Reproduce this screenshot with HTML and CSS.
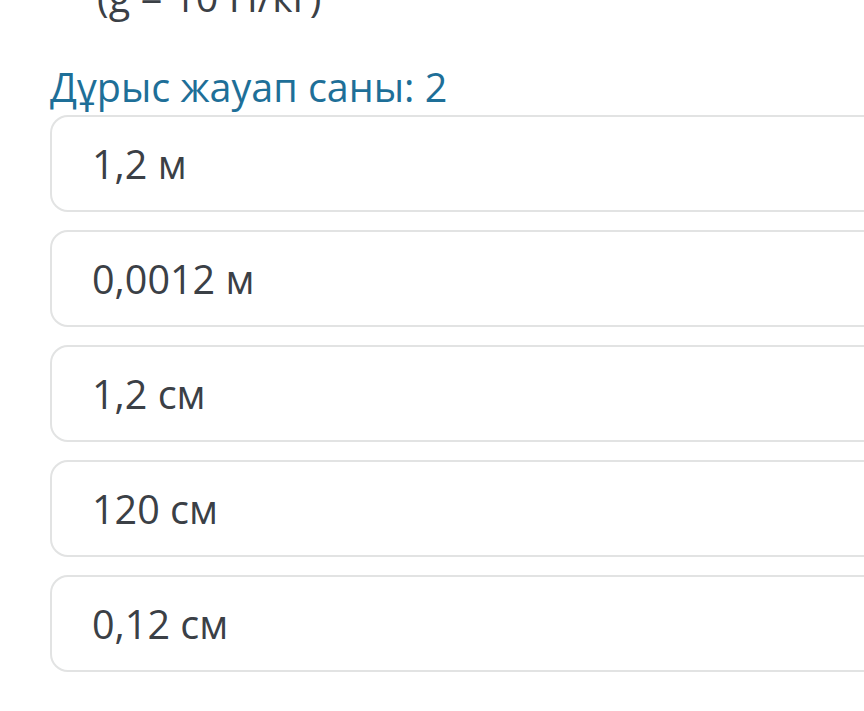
FILE: index.html
```html
<!DOCTYPE html>
<html>
<head>
<meta charset="utf-8">
<link rel="stylesheet" href="styles.css">
</head>
<body>
<div class="page">
  <div class="question">(g = 10 Н/кг)</div>
  <div class="count">Дұрыс жауап саны: 2</div>
  <div class="options">
    <div class="option">1,2 м</div>
    <div class="option">0,0012 м</div>
    <div class="option">1,2 см</div>
    <div class="option">120 см</div>
    <div class="option">0,12 см</div>
  </div>
</div>
</body>
</html>
```
FILE: styles.css
```css
html, body {
  margin: 0;
  padding: 0;
  background: #ffffff;
  overflow: hidden;
}
.page {
  font-family: "Open Sans", "Noto Sans", sans-serif;
  padding-left: 50px;
  width: 900px;
}
.question {
  color: #3b4046;
  font-size: 39.5px;
  line-height: 52px;
  margin-top: -29px;
  padding-left: 47px;
}
.count {
  color: #1e6f98;
  font-size: 39.5px;
  line-height: 52px;
  margin-top: 38px;
}
.options {
  display: flex;
  flex-direction: column;
  gap: 18px;
  margin-top: 2px;
}
.option {
  height: 93px;
  border: 2px solid #e2e3e3;
  border-radius: 18px;
  box-sizing: content-box;
  display: flex;
  align-items: center;
  padding-left: 40px;
  color: #3b4046;
  font-size: 39.5px;
}
```
